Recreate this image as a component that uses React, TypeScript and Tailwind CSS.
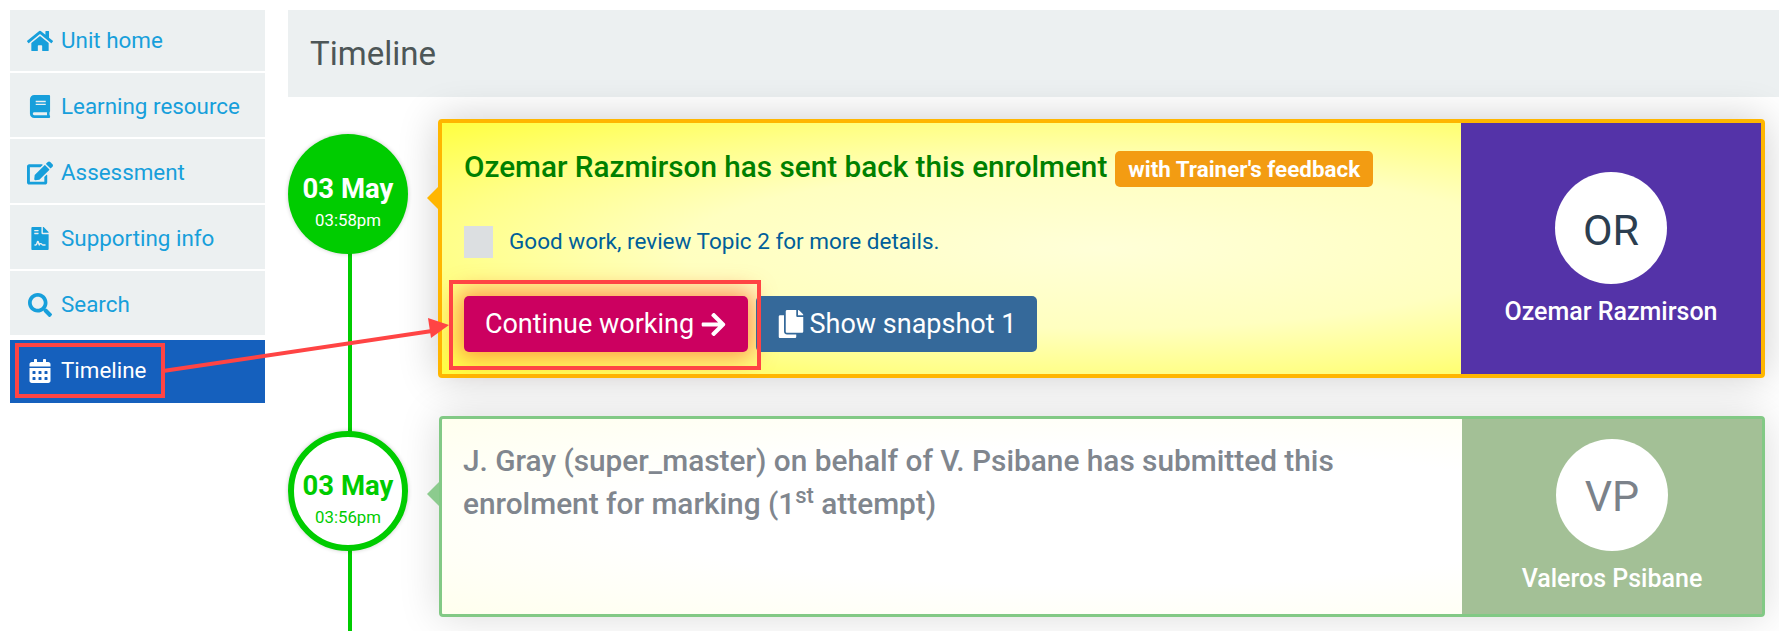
import { FaArrowRight, FaBook, FaCalendarAlt, FaCopy, FaEdit, FaFileContract, FaHome, FaSearch } from "react-icons/fa";

const navItems = [
  { label: "Unit home", icon: FaHome, iconClass: "text-[26px] w-[26px]", rowClass: "h-[63px]" },
  { label: "Learning resource", icon: FaBook, iconClass: "text-[23px] w-[26px]", rowClass: "h-[66px] pt-[3px]" },
  { label: "Assessment", icon: FaEdit, iconClass: "text-[26px] w-[26px]", rowClass: "h-[66px] pt-[3px]" },
  { label: "Supporting info", icon: FaFileContract, iconClass: "text-[23px] w-[26px]", rowClass: "h-[66px] pt-[3px]" },
  { label: "Search", icon: FaSearch, iconClass: "text-[24px] w-[26px]", rowClass: "h-[66px] pt-[3px]" },
];

function Sidebar() {
  return (
    <aside className="w-[255px] shrink-0">
      {navItems.map((item) => (
        <div
          key={item.label}
          className={`flex items-center gap-[8px] border-b-2 border-white bg-[#ecf0f1] pl-[17px] text-[22.4px] text-[#179fdb] ${item.rowClass}`}
        >
          <item.icon className={item.iconClass} />
          <span>{item.label}</span>
        </div>
      ))}
      <div className="mt-[3px] flex h-[63px] items-center gap-[8px] bg-[#1560bd] pb-[2px] pl-[17px] text-[22.4px] text-white">
        <FaCalendarAlt className="w-[26px] text-[24px]" />
        <span>Timeline</span>
      </div>
    </aside>
  );
}

function Arrow({ className }: { className: string }) {
  return <div className={`absolute left-[-15px] top-[63px] size-0 border-y-[12px] border-r-[12px] border-y-transparent ${className}`} />;
}

function Annotations() {
  return (
    <>
      <div className="absolute left-[15px] top-[343px] h-[55px] w-[150px] border-[4px] border-[#ff4444]" />
      <div className="absolute left-[449px] top-[280px] h-[90px] w-[312px] border-[4px] border-[#ff4444]" />
      <svg className="absolute left-0 top-0" width="500" height="400" viewBox="0 0 500 400">
        <line x1="163" y1="371" x2="432" y2="331" stroke="#ff4444" strokeWidth="4" />
        <polygon points="449,325 428,318 431,338" fill="#ff4444" />
      </svg>
    </>
  );
}

export default function App() {
  return (
    <div className="relative flex h-[631px] gap-[23px] overflow-hidden bg-white pl-[10px] pt-[10px] font-['Roboto',sans-serif]">
      <Sidebar />
      <main className="min-w-0 flex-1">
        <div className="flex h-[87px] items-center bg-[#ecf0f1] pl-[22px] text-[33px] text-[#4d5657]">Timeline</div>

        <div className="relative mr-[14px] mt-[22px]">
          <div className="absolute bottom-[-100px] left-[60px] top-[100px] w-[4px] bg-[#00cc00]" />

          <section className="flex items-start">
            <div className="relative z-10 mt-[15px] flex size-[120px] shrink-0 flex-col items-center justify-center rounded-full bg-[#00cc00] pt-[18px] text-white shadow-[0_0_4px_rgba(0,0,0,0.2)]">
              <span className="text-[27.5px] font-bold leading-[34px]">03 May</span>
              <span className="text-[16.8px] leading-[28px]">03:58pm</span>
            </div>
            <div className="relative ml-[30px] flex h-[259px] flex-1 rounded border-4 border-[#ffb600] bg-[radial-gradient(ellipse_at_center,#ffffd8_0%,#ffffc0_45%,#ffff88_71%,#ffff40_100%)] shadow-[0_0_40px_rgba(0,0,0,0.2)]">
              <Arrow className="border-r-[#ffb600]" />
              <div className="min-w-0 flex-1 pl-[22px]">
                <div className="mt-[24px] flex items-center whitespace-nowrap">
                  <h2 className="text-[29.7px] font-medium leading-[40px] text-[#008000]">Ozemar Razmirson has sent back this enrolment</h2>
                  <span className="ml-[8px] mt-[3px] rounded-[5px] bg-[#f39c12] px-[13px] py-[4px] text-[22.4px] font-bold leading-[28px] text-white">with Trainer's feedback</span>
                </div>
                <div className="mt-[39px] flex h-[32px] items-start gap-[16px]">
                  <div className="h-[32px] w-[29px] bg-[#dcdfe1]" />
                  <p className="text-[22.5px] leading-[30px] text-[#005f9a]">Good work, review Topic 2 for more details.</p>
                </div>
                <div className="mt-[38px] flex gap-2">
                  <button className="flex h-[56px] w-[284px] items-center justify-center gap-[6px] rounded-[5px] bg-[#cc0060] text-[27px] text-white shadow-[0_0_22px_6px_rgba(255,90,40,0.6)]">
                    Continue working <FaArrowRight className="text-[27px]" />
                  </button>
                  <button className="flex h-[56px] w-[281px] items-center justify-center gap-[5px] rounded-[5px] bg-[#35699a] text-[27px] text-white">
                    <FaCopy className="text-[28px]" /> Show snapshot 1
                  </button>
                </div>
              </div>
              <div className="flex w-[300px] shrink-0 flex-col items-center bg-[#5433a8] pt-[49px]">
                <div className="flex size-[112px] items-center justify-center rounded-full bg-white pt-[4px] text-[43px] text-[#2c3e50]">OR</div>
                <div className="mt-[9px] text-[25px] font-medium text-white">Ozemar Razmirson</div>
              </div>
            </div>
          </section>

          <section className="mt-[38px] flex items-start">
            <div className="relative z-10 mt-[15px] flex size-[120px] shrink-0 flex-col items-center justify-center rounded-full border-[6px] border-[#00cc00] bg-white pt-[18px] text-[#00cc00] shadow-[0_0_4px_rgba(0,0,0,0.2)]">
              <span className="text-[27.5px] font-bold leading-[34px]">03 May</span>
              <span className="text-[16.8px] leading-[28px]">03:56pm</span>
            </div>
            <div className="relative ml-[31px] flex h-[201px] flex-1 rounded border-[3px] border-[#82c985] bg-[radial-gradient(ellipse_at_center,#ffffff_0%,#ffffff_50%,#ffffee_100%)] shadow-[0_0_40px_rgba(0,0,0,0.15)]">
              <Arrow className="border-r-[#8ccb8e]" />
              <div className="min-w-0 flex-1 pl-[21px] pt-[20px]">
                <p className="w-[880px] text-[29.8px] font-medium leading-[43px] text-[#80868e]">
                  J. Gray (super_master) on behalf of V. Psibane has submitted this enrolment for marking (1<sup className="text-[22px] leading-none">st</sup> attempt)
                </p>
              </div>
              <div className="flex w-[300px] shrink-0 flex-col items-center bg-[#a3c096] pt-[20px]">
                <div className="flex size-[112px] items-center justify-center rounded-full bg-white pt-[3px] text-[43px] text-[#7b828a]">VP</div>
                <div className="mt-[9px] text-[25px] font-medium text-white">Valeros Psibane</div>
              </div>
            </div>
          </section>
        </div>
      </main>
      <Annotations />
    </div>
  );
}
